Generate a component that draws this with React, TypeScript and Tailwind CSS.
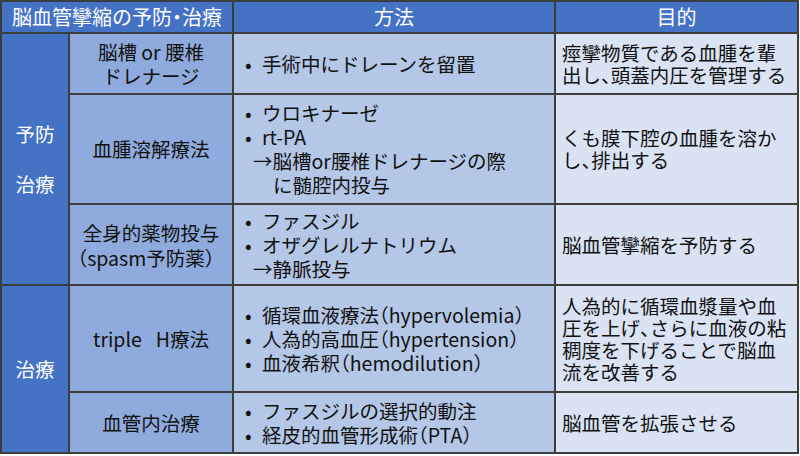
import React from "react";

const font = { fontFamily: '"Noto Sans CJK JP", "Noto Sans", sans-serif' };

// half-width alternates for punctuation, like the proportional punctuation of the original
const halt = "[font-feature-settings:'halt']";

function C() {
  return <span className={halt}>、</span>;
}

function P({ children }: { children: React.ReactNode }) {
  return (
    <>
      <span className={halt}>（</span>
      {children}
      <span className={halt}>）</span>
    </>
  );
}

function Bullets({ items }: { items: React.ReactNode[] }) {
  return (
    <div className="flex flex-col">
      {items.map((it, i) => (
        <div key={i} className="flex whitespace-nowrap">
          <span className="w-[18px] shrink-0 pl-[1px]">•</span>
          <span>{it}</span>
        </div>
      ))}
    </div>
  );
}

function Note({ children, indent = false }: { children: React.ReactNode; indent?: boolean }) {
  return <div className={indent ? "pl-[39px]" : "pl-[19px]"}>{children}</div>;
}

export default function App() {
  const head = "flex items-center bg-[#4472c4] text-white text-[20px]";
  const c1 = "flex flex-col items-center justify-center bg-[#4472c4] text-white";
  const c2 = "flex flex-col items-center justify-center bg-[#8faadc] text-center";
  const c3 = "flex flex-col justify-center bg-[#b4c7e7] pl-[10px] leading-[24px]";
  const c4 = "flex flex-col justify-center bg-[#dae3f3] pl-[6px] leading-[22px] whitespace-nowrap";

  return (
    <div className="h-[456px] w-[800px] bg-white" style={font}>
      <div className="grid w-[799px] grid-cols-[66px_162px_320px_241px] grid-rows-[30px_59px_108px_79px_105px_59px] gap-[2px] bg-[#3d3d3d] p-[2px] text-[19.5px] text-[#111]">
        <div className={`${head} col-span-2 pl-[10px]`}>
          脳血管攣縮の予防<span className={halt}>・</span>治療
        </div>
        <div className={`${head} justify-center`}>方法</div>
        <div className={`${head} justify-center`}>目的</div>

        <div className={`${c1} row-span-3 gap-[26px] leading-[24px]`}>
          <span>予防</span>
          <span>治療</span>
        </div>
        <div className={`${c2} leading-[24px]`}>
          <span>脳槽 or 腰椎</span>
          <span>ドレナージ</span>
        </div>
        <div className={c3}>
          <Bullets items={["手術中にドレーンを留置"]} />
        </div>
        <div className={c4}>
          <span>痙攣物質である血腫を輩</span>
          <span>
            出し<C />頭蓋内圧を管理する
          </span>
        </div>

        <div className={c2}>血腫溶解療法</div>
        <div className={c3}>
          <Bullets items={["ウロキナーゼ", "rt-PA"]} />
          <div className="-ml-[10px]">
            <Note>→脳槽or腰椎ドレナージの際</Note>
            <Note indent>に髄腔内投与</Note>
          </div>
        </div>
        <div className={c4}>
          <span>くも膜下腔の血腫を溶か</span>
          <span>
            し<C />排出する
          </span>
        </div>

        <div className={`${c2} leading-[25px]`}>
          <span>全身的薬物投与</span>
          <span className="-ml-[10px]">（spasm予防薬）</span>
        </div>
        <div className={c3}>
          <Bullets items={["ファスジル", "オザグレルナトリウム"]} />
          <div className="-ml-[10px]">
            <Note>→静脈投与</Note>
          </div>
        </div>
        <div className={c4}>脳血管攣縮を予防する</div>

        <div className={`${c1} row-span-2`}>治療</div>
        <div className={c2}>
          <span>
            triple<span className="inline-block w-[14px]" />H療法
          </span>
        </div>
        <div className={`${c3} leading-[23px]`}>
          <Bullets
            items={[
              <>循環血液療法<P>hypervolemia</P></>,
              <>人為的高血圧<P>hypertension</P></>,
              <>血液希釈<P>hemodilution</P></>,
            ]}
          />
        </div>
        <div className={`${c4} leading-[21px]`}>
          <span>人為的に循環血漿量や血</span>
          <span>
            圧を上げ<C />さらに血液の粘
          </span>
          <span>稠度を下げることで脳血</span>
          <span>流を改善する</span>
        </div>

        <div className={c2}>血管内治療</div>
        <div className={c3}>
          <Bullets items={["ファスジルの選択的動注", <>経皮的血管形成術<P>PTA</P></>]} />
        </div>
        <div className={c4}>脳血管を拡張させる</div>
      </div>
    </div>
  );
}
